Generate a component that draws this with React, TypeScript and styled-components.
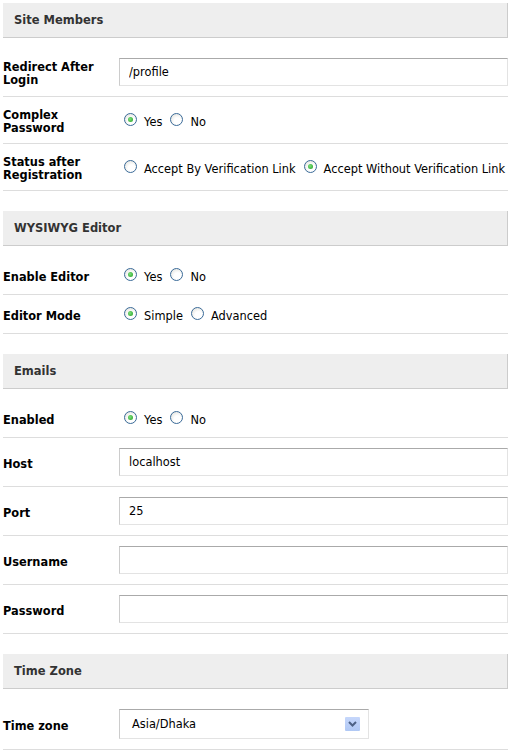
import React from "react";
import styled, { createGlobalStyle } from "styled-components";

const GlobalStyle = createGlobalStyle`
  body {
    margin: 0;
    padding: 3px;
    background: #fff;
    font-family: "DejaVu Sans", Verdana, sans-serif;
    font-size: 11px;
    color: #000;
  }
`;

const Page = styled.div`
  width: 505px;
`;

const Section = styled.section`
  margin-bottom: 20px;
`;

const SectionHeader = styled.h3`
  margin: 0 0 10px 0;
  height: 34px;
  padding: 0 0 0 11px;
  display: flex;
  align-items: center;
  background: #eeeeee;
  border-bottom: 1px solid #cccccc;
  border-right: 1px solid #cccccc;
  font-size: 11.5px;
  font-weight: bold;
  color: #333;
`;

const Row = styled.div`
  display: flex;
  align-items: center;
  padding: 10px 0;
  border-bottom: 1px solid #dddddd;
`;

const Label = styled.label`
  width: 116px;
  flex-shrink: 0;
  padding-top: 2px;
  margin-bottom: -2px;
  font-weight: bold;
  font-size: 11.4px;
  line-height: 13px;
`;

const TextInput = styled.input`
  box-sizing: border-box;
  flex: 1;
  height: 28px;
  padding: 0 9px;
  border: 1px solid #e3e3e3;
  border-top-color: #aaaaaa;
  border-left-color: #cccccc;
  font-family: "DejaVu Sans", Verdana, sans-serif;
  font-size: 11.4px;
  color: #000;
  outline: none;
`;

const Options = styled.div`
  display: flex;
  align-items: center;
  height: 18px;
  padding-left: 5px;
  gap: 8px;
  font-size: 11.4px;
`;

const Option = styled.span`
  display: inline-flex;
  align-items: center;
  gap: 7px;
  white-space: nowrap;
  padding-top: 4px;
`;

const RadioDot = styled.span<{ $on?: boolean }>`
  box-sizing: border-box;
  width: 13px;
  height: 13px;
  border-radius: 50%;
  border: 1px solid #3a6a98;
  background: radial-gradient(circle at 60% 65%, #ffffff 35%, #dcdcd5 100%);
  position: relative;
  margin-top: -5px;
  &::after {
    content: "";
    display: ${(p) => (p.$on ? "block" : "none")};
    position: absolute;
    left: 3px;
    top: 3px;
    width: 5px;
    height: 5px;
    border-radius: 50%;
    background: radial-gradient(circle at 40% 40%, #7ee07e, #1e9e1e);
  }
`;

const SelectBox = styled.div`
  box-sizing: border-box;
  width: 250px;
  height: 30px;
  display: flex;
  align-items: center;
  justify-content: space-between;
  padding: 0 8px 0 12px;
  border: 1px solid #e3e3e3;
  border-top-color: #aaaaaa;
  border-left-color: #cccccc;
  font-size: 11.4px;
`;

const DropButton = styled.span`
  width: 15px;
  height: 14px;
  background: linear-gradient(#c6d7fb, #b0c8f4);
  border-radius: 1px;
  display: flex;
  align-items: center;
  justify-content: center;
`;

type RadioItem = { label: string; checked?: boolean };

const RadioGroup = ({ items }: { items: RadioItem[] }) => (
  <Options>
    {items.map((it) => (
      <Option key={it.label}>
        <RadioDot $on={it.checked} />
        {it.label}
      </Option>
    ))}
  </Options>
);

const App = () => {
  return (
    <Page>
      <GlobalStyle />
      <Section>
        <SectionHeader>Site Members</SectionHeader>
        <Row>
          <Label>Redirect After Login</Label>
          <TextInput defaultValue="/profile" />
        </Row>
        <Row>
          <Label>Complex Password</Label>
          <RadioGroup items={[{ label: "Yes", checked: true }, { label: "No" }]} />
        </Row>
        <Row>
          <Label>Status after Registration</Label>
          <RadioGroup
            items={[
              { label: "Accept By Verification Link" },
              { label: "Accept Without Verification Link", checked: true },
            ]}
          />
        </Row>
      </Section>

      <Section>
        <SectionHeader>WYSIWYG Editor</SectionHeader>
        <Row>
          <Label>Enable Editor</Label>
          <RadioGroup items={[{ label: "Yes", checked: true }, { label: "No" }]} />
        </Row>
        <Row>
          <Label>Editor Mode</Label>
          <RadioGroup items={[{ label: "Simple", checked: true }, { label: "Advanced" }]} />
        </Row>
      </Section>

      <Section>
        <SectionHeader>Emails</SectionHeader>
        <Row>
          <Label>Enabled</Label>
          <RadioGroup items={[{ label: "Yes", checked: true }, { label: "No" }]} />
        </Row>
        <Row>
          <Label>Host</Label>
          <TextInput defaultValue="localhost" />
        </Row>
        <Row>
          <Label>Port</Label>
          <TextInput defaultValue="25" />
        </Row>
        <Row>
          <Label>Username</Label>
          <TextInput defaultValue="" />
        </Row>
        <Row>
          <Label>Password</Label>
          <TextInput type="password" defaultValue="" />
        </Row>
      </Section>

      <Section>
        <SectionHeader>Time Zone</SectionHeader>
        <Row>
          <Label>Time zone</Label>
          <SelectBox>
            <span>Asia/Dhaka</span>
            <DropButton>
              <svg width="9" height="6" viewBox="0 0 9 6">
                <path d="M1 1 L4.5 4.5 L8 1" stroke="#4d6185" strokeWidth="2" fill="none" />
              </svg>
            </DropButton>
          </SelectBox>
        </Row>
      </Section>
    </Page>
  );
};

export default App;
